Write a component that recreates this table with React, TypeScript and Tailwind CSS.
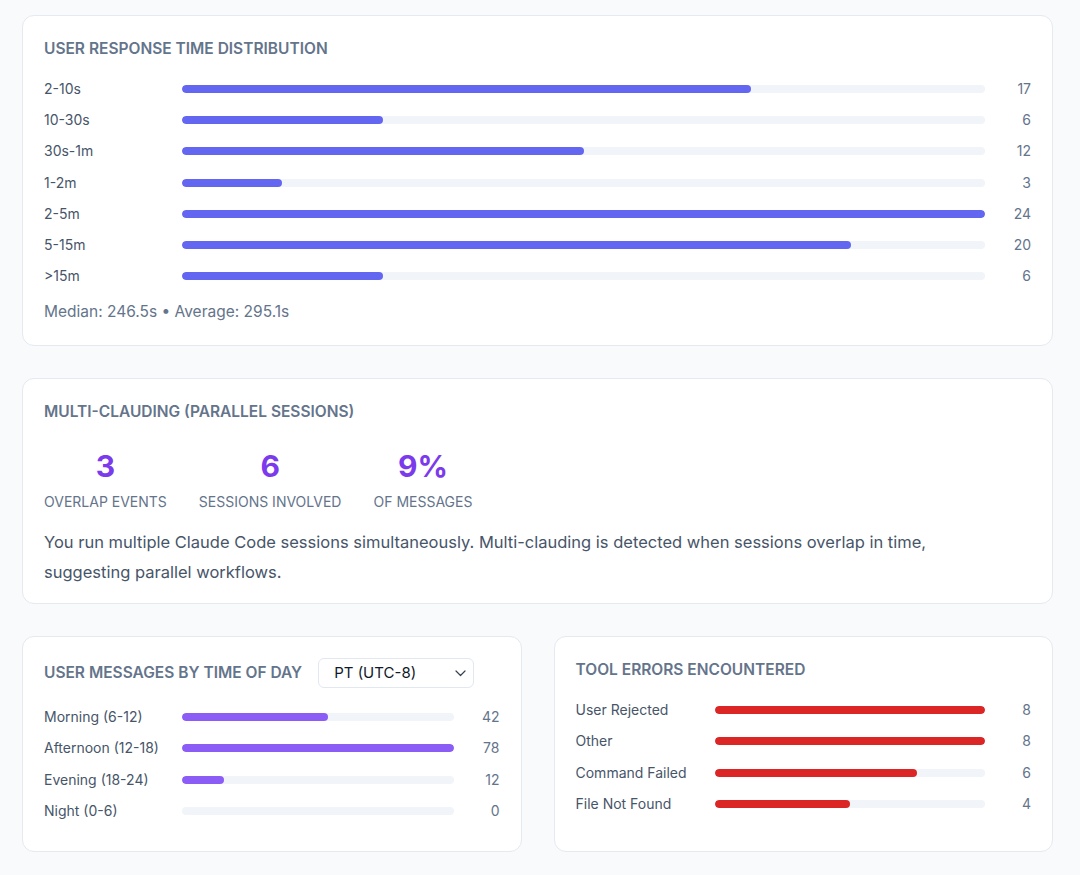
import React from "react";

type Row = { label: string; value: number };

const responseRows: Row[] = [
  { label: "2-10s", value: 17 },
  { label: "10-30s", value: 6 },
  { label: "30s-1m", value: 12 },
  { label: "1-2m", value: 3 },
  { label: "2-5m", value: 24 },
  { label: "5-15m", value: 20 },
  { label: ">15m", value: 6 },
];

const timeRows: Row[] = [
  { label: "Morning (6-12)", value: 42 },
  { label: "Afternoon (12-18)", value: 78 },
  { label: "Evening (18-24)", value: 12 },
  { label: "Night (0-6)", value: 0 },
];

const errorRows: Row[] = [
  { label: "User Rejected", value: 8 },
  { label: "Other", value: 8 },
  { label: "Command Failed", value: 6 },
  { label: "File Not Found", value: 4 },
];

function Bars({ rows, color, labelW }: { rows: Row[]; color: string; labelW: string }) {
  const max = Math.max(...rows.map((r) => r.value));
  return (
    <div className="flex flex-col gap-[11.2px]">
      {rows.map((r) => (
        <div key={r.label} className="flex items-center h-[20px]">
          <div className={`${labelW} shrink-0 text-[14px] leading-[20px] text-[#475569]`}>{r.label}</div>
          <div className="flex-1 h-[8px] rounded-full bg-[#f1f5f9] overflow-hidden">
            <div
              className={`h-full rounded-full ${color}`}
              style={{ width: `${max ? (r.value / max) * 100 : 0}%` }}
            />
          </div>
          <div className="w-[46px] shrink-0 text-right text-[14px] leading-[20px] text-[#64748b]">{r.value}</div>
        </div>
      ))}
    </div>
  );
}

function Title({ children }: { children: React.ReactNode }) {
  return (
    <h2 className="text-[15.5px] leading-[24px] font-semibold uppercase text-[#64748b] whitespace-nowrap">{children}</h2>
  );
}

export default function App() {
  return (
    <div
      className="min-h-[875px] bg-[#f8fafc] pl-[22px] pr-[27px] pt-[15px] pb-[24px]"
      style={{ fontFamily: "Inter, 'Noto Sans', sans-serif" }}
    >
      <div className="flex flex-col gap-8">
        <section className="bg-white border border-[#e5e9f0] rounded-xl px-[21px] pt-[21px] pb-[21px]">
          <Title>User Response Time Distribution</Title>
          <div className="mt-[18px]">
            <Bars rows={responseRows} color="bg-[#6366f1]" labelW="w-[138px]" />
          </div>
          <p className="mt-[14px] text-[15.5px] leading-[24px] text-[#64748b]">
            Median: 246.5s • Average: 295.1s
          </p>
        </section>

        <section className="bg-white border border-[#e5e9f0] rounded-xl px-[21px] pt-[21px] pb-[16px]">
          <Title>Multi-Clauding (Parallel Sessions)</Title>
          <div className="mt-[24px] flex gap-8">
            {[
              { n: "3", l: "Overlap Events" },
              { n: "6", l: "Sessions Involved" },
              { n: "9%", l: "Of Messages" },
            ].map((s) => (
              <div key={s.l} className="text-center">
                <div className="text-[30px] leading-[36px] font-bold text-[#7c3aed]">{s.n}</div>
                <div className="mt-[8px] text-[14px] leading-[20px] uppercase text-[#64748b]">{s.l}</div>
              </div>
            ))}
          </div>
          <p className="mt-[15px] max-w-[960px] text-[16.5px] leading-[30px] text-[#475569]">
            You run multiple Claude Code sessions simultaneously. Multi-clauding is detected when sessions overlap in time,
            suggesting parallel workflows.
          </p>
        </section>

        <div className="grid grid-cols-2 gap-8">
          <section className="bg-white border border-[#e5e9f0] rounded-xl px-[21px] pt-[21px] pb-[30px]">
            <div className="flex items-center gap-4">
              <Title>User Messages by Time of Day</Title>
              <div className="relative">
                <select
                  defaultValue="pt"
                  className="appearance-none w-[156px] h-[30px] pl-[15px] pr-[30px] border border-[#e2e8f0] rounded-md bg-white text-[15px] text-[#111827] outline-none"
                >
                  <option value="pt">PT (UTC-8)</option>
                  <option value="utc">UTC</option>
                </select>
                <svg
                  className="absolute right-[8px] top-[12px] pointer-events-none"
                  width="11"
                  height="7"
                  viewBox="0 0 11 7"
                  fill="none"
                >
                  <path d="M1 1l4.5 4.5L10 1" stroke="#374151" strokeWidth="1.2" strokeLinecap="round" strokeLinejoin="round" />
                </svg>
              </div>
            </div>
            <div className="mt-[19px]">
              <Bars rows={timeRows} color="bg-[#8b5cf6]" labelW="w-[138px]" />
            </div>
          </section>

          <section className="bg-white border border-[#e5e9f0] rounded-xl px-[21px] pt-[21px] pb-[21px]">
            <Title>Tool Errors Encountered</Title>
            <div className="mt-[18px]">
              <Bars rows={errorRows} color="bg-[#dc2626]" labelW="w-[139px]" />
            </div>
          </section>
        </div>
      </div>
    </div>
  );
}
